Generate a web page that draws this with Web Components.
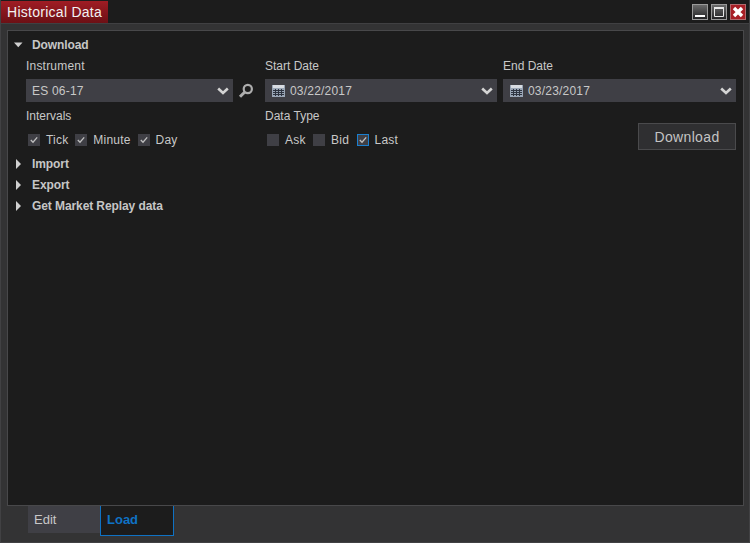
<!DOCTYPE html>
<html>
<head>
<meta charset="utf-8">
<title>Historical Data</title>
<style>
  html, body { margin: 0; height: 100%; background: #333334; overflow: hidden; }
  body { font: 12px "Liberation Sans", Arial, sans-serif; color: #c8c8c8; }
</style>
</head>
<body>
<hd-window>
  <hd-titlebar slot="title">Historical Data</hd-titlebar>

  <hd-expander open>
    <span slot="head">Download</span>
    <hd-download></hd-download>
  </hd-expander>
  <hd-expander><span slot="head">Import</span></hd-expander>
  <hd-expander><span slot="head">Export</span></hd-expander>
  <hd-expander><span slot="head">Get Market Replay data</span></hd-expander>

  <hd-tab slot="tabs">Edit</hd-tab>
  <hd-tab slot="tabs" active>Load</hd-tab>
</hd-window>

<script>
// outer window: title bar, grey frame, dark panel, tabs under the panel
class HdWindow extends HTMLElement {
  constructor() {
    super();
    this.attachShadow({ mode: 'open' }).innerHTML = `
      <style>
        :host { display: flex; flex-direction: column; height: 543px; box-sizing: border-box; background: #333334; border: 1px solid #414143; border-top: 0; }
        .frame { flex: 1; display: flex; flex-direction: column; padding: 6px 5px 0 6px; min-height: 0; border-top: 1px solid #404042; }
        .panel { flex: 1; background: #1c1c1c; border: 1px solid #48484a; padding-top: 3px; min-height: 0; }
        .tabs { height: 36px; display: flex; align-items: flex-start; padding-left: 21px; }
      </style>
      <slot name="title"></slot>
      <div class="frame">
        <div class="panel"><slot></slot></div>
        <div class="tabs"><slot name="tabs"></slot></div>
      </div>`;
  }
}

class HdTitlebar extends HTMLElement {
  constructor() {
    super();
    this.attachShadow({ mode: 'open' }).innerHTML = `
      <style>
        :host { display: flex; height: 23px; box-sizing: border-box; padding-top: 1px; background: #1c1c1c; }
        .name { height: 22px; box-sizing: border-box; padding: 3px 6px 0; font-size: 14px; letter-spacing: .27px; line-height: 17px; color: #f2f2f2; background: linear-gradient(#a01c24, #6c1015); }
        .btns { margin-left: auto; display: flex; gap: 3px; padding: 3px 3px 0 0; }
        .btn { width: 16px; height: 16px; box-sizing: border-box; border: 1px solid #9a9a9a; background: linear-gradient(#6a6a6a, #222224); }
        .btn svg { display: block; width: 14px; height: 14px; }
        .close { background: #a81f26; border-color: #b06a6e; }
      </style>
      <div class="name"><slot></slot></div>
      <div class="btns">
        <div class="btn"><svg viewBox="0 0 14 14"><rect x="2" y="10" width="10" height="2" fill="#fff"/></svg></div>
        <div class="btn"><svg viewBox="0 0 14 14"><path d="M2.500 2.500h9v9h-9z" fill="none" stroke="#e8e8e8" stroke-width="1"/><rect x="2" y="2" width="10" height="2" fill="#e8e8e8"/></svg></div>
        <div class="btn close"><svg viewBox="0 0 14 14"><path d="M3 3l8 8M11 3l-8 8" stroke="#fff" stroke-width="3.400"/></svg></div>
      </div>`;
  }
}

// collapsible section, head row is 21px
class HdExpander extends HTMLElement {
  constructor() {
    super();
    const open = this.hasAttribute('open');
    this.attachShadow({ mode: 'open' }).innerHTML = `
      <style>
        :host { display: block; }
        .head { height: 21px; display: flex; align-items: center; font-weight: bold; letter-spacing: -.09px; color: #c6c6c6; }
        svg { width: 10px; height: 10px; margin: 0 9px 0 5px; flex: none; }
      </style>
      <div class="head">
        ${open
          ? '<svg viewBox="0 0 10 10"><path d="M1 2.500h8.500L5.250 7.200z" fill="#d0d0d0"/></svg>'
          : '<svg viewBox="0 0 10 10"><path d="M3 0L8 5l-5 5z" fill="#d0d0d0"/></svg>'}
        <slot name="head"></slot>
      </div>
      <slot></slot>`;
  }
}

class HdDownload extends HTMLElement {
  constructor() {
    super();
    this.attachShadow({ mode: 'open' }).innerHTML = `
      <style>
        :host { display: grid; grid-template-columns: 239px 238px 233px; grid-template-rows: 24px 23px 25px 26px; padding-left: 18px; letter-spacing: .2px; }
        .lbl { display: flex; align-items: center; padding-top: 2px; letter-spacing: 0; }
        .top { padding: 0 0 2px; }
        .inst-lbl { letter-spacing: .2px; }
        .checks { display: flex; gap: 7px; padding-left: 2px; align-items: center; }
        .checks.wide { gap: 7.500px; }
        .inst { display: flex; align-items: center; }
        .inst hd-combo { width: 207px; }
        .inst svg { width: 16px; height: 16px; margin-left: 5px; }
        .dl { grid-column: 3; grid-row: 3 / 5; margin-top: 21px; justify-self: end; }
        hd-combo.date { width: 232px; }
        hd-combo.end { width: 233px; }
      </style>
      <div class="lbl top inst-lbl">Instrument</div>
      <div class="lbl top">Start Date</div>
      <div class="lbl top">End Date</div>

      <div class="inst">
        <hd-combo>ES 06-17</hd-combo>
        <svg viewBox="0 0 16 16"><circle cx="9.800" cy="6" r="4.100" fill="none" stroke="#adadad" stroke-width="2.200"/><path d="M6.800 9L2 13.800" stroke="#adadad" stroke-width="3"/></svg>
      </div>
      <hd-combo class="date" calendar>03/22/2017</hd-combo>
      <hd-combo class="end" calendar>03/23/2017</hd-combo>

      <div class="lbl">Intervals</div>
      <div class="lbl">Data Type</div>
      <hd-button class="dl">Download</hd-button>

      <div class="checks">
        <hd-check checked>Tick</hd-check>
        <hd-check checked>Minute</hd-check>
        <hd-check checked>Day</hd-check>
      </div>
      <div class="checks wide">
        <hd-check>Ask</hd-check>
        <hd-check>Bid</hd-check>
        <hd-check checked focused>Last</hd-check>
      </div>`;
  }
}

class HdCombo extends HTMLElement {
  constructor() {
    super();
    const cal = this.hasAttribute('calendar');
    this.attachShadow({ mode: 'open' }).innerHTML = `
      <style>
        :host { display: flex; align-items: center; height: 23px; box-sizing: border-box; padding: 0 4px 0 6px; background: #3f3f45; color: #c8c8c8; }
        .cal { width: 13px; height: 12px; margin: 0 5px 0 1px; flex: none; }
        .txt { flex: 1; }
        .arrow { width: 12px; height: 8px; flex: none; }
      </style>
      ${cal ? `<svg class="cal" viewBox="0 0 13 12">
        <rect x="0" y="0" width="13" height="12" fill="#9aa6b6"/>
        <rect x="1" y="0" width="11" height="3" fill="#d8dce2"/>
        <path d="M1 5.500h11M1 7.500h11M1 9.500h11M3.500 4v7M6.500 4v7M9.500 4v7" stroke="#2e3440" stroke-width="1"/>
      </svg>` : ''}
      <span class="txt"><slot></slot></span>
      <svg class="arrow" viewBox="0 0 12 8"><path d="M1.200 1.500L6 6l4.800-4.500" fill="none" stroke="#d4d4d4" stroke-width="2.600"/></svg>`;
  }
}

class HdCheck extends HTMLElement {
  constructor() {
    super();
    const on = this.hasAttribute('checked');
    const focused = this.hasAttribute('focused');
    this.attachShadow({ mode: 'open' }).innerHTML = `
      <style>
        :host { display: flex; align-items: center; gap: 6px; }
        .box { width: 12px; height: 12px; box-sizing: border-box; background: #3f3f45; ${focused ? 'border: 1px solid #1a7fd0;' : ''} display: flex; align-items: center; justify-content: center; }
        svg { width: 8px; height: 8px; }
      </style>
      <div class="box">${on ? '<svg viewBox="0 0 8 8"><path d="M0.800 4L3 6.200 7.200 1.300" fill="none" stroke="#c0c0c0" stroke-width="1.300"/></svg>' : ''}</div>
      <span><slot></slot></span>`;
  }
}

class HdButton extends HTMLElement {
  constructor() {
    super();
    this.attachShadow({ mode: 'open' }).innerHTML = `
      <style>
        :host { display: flex; align-items: center; justify-content: center; width: 98px; height: 27px; box-sizing: border-box; background: #2f2f31; border: 1px solid #4a4a4c; font-size: 14px; letter-spacing: .35px; color: #c4c4c4; }
      </style>
      <slot></slot>`;
  }
}

class HdTab extends HTMLElement {
  constructor() {
    super();
    const active = this.hasAttribute('active');
    this.attachShadow({ mode: 'open' }).innerHTML = `
      <style>
        :host { display: block; box-sizing: border-box; padding: 6px 0 0 6px; line-height: 16px;
          ${active
            ? 'width: 74px; height: 30px; background: #1c1c1c; border: 1px solid #0f72c4; border-top: 0; color: #0f72c4; font-weight: bold; font-size: 13px;'
            : 'width: 72px; height: 27px; background: #3f3f45; color: #c8c8c8; font-size: 13px;'}
        }
      </style>
      <slot></slot>`;
  }
}

customElements.define('hd-window', HdWindow);
customElements.define('hd-titlebar', HdTitlebar);
customElements.define('hd-expander', HdExpander);
customElements.define('hd-download', HdDownload);
customElements.define('hd-combo', HdCombo);
customElements.define('hd-check', HdCheck);
customElements.define('hd-button', HdButton);
customElements.define('hd-tab', HdTab);
</script>
</body>
</html>
